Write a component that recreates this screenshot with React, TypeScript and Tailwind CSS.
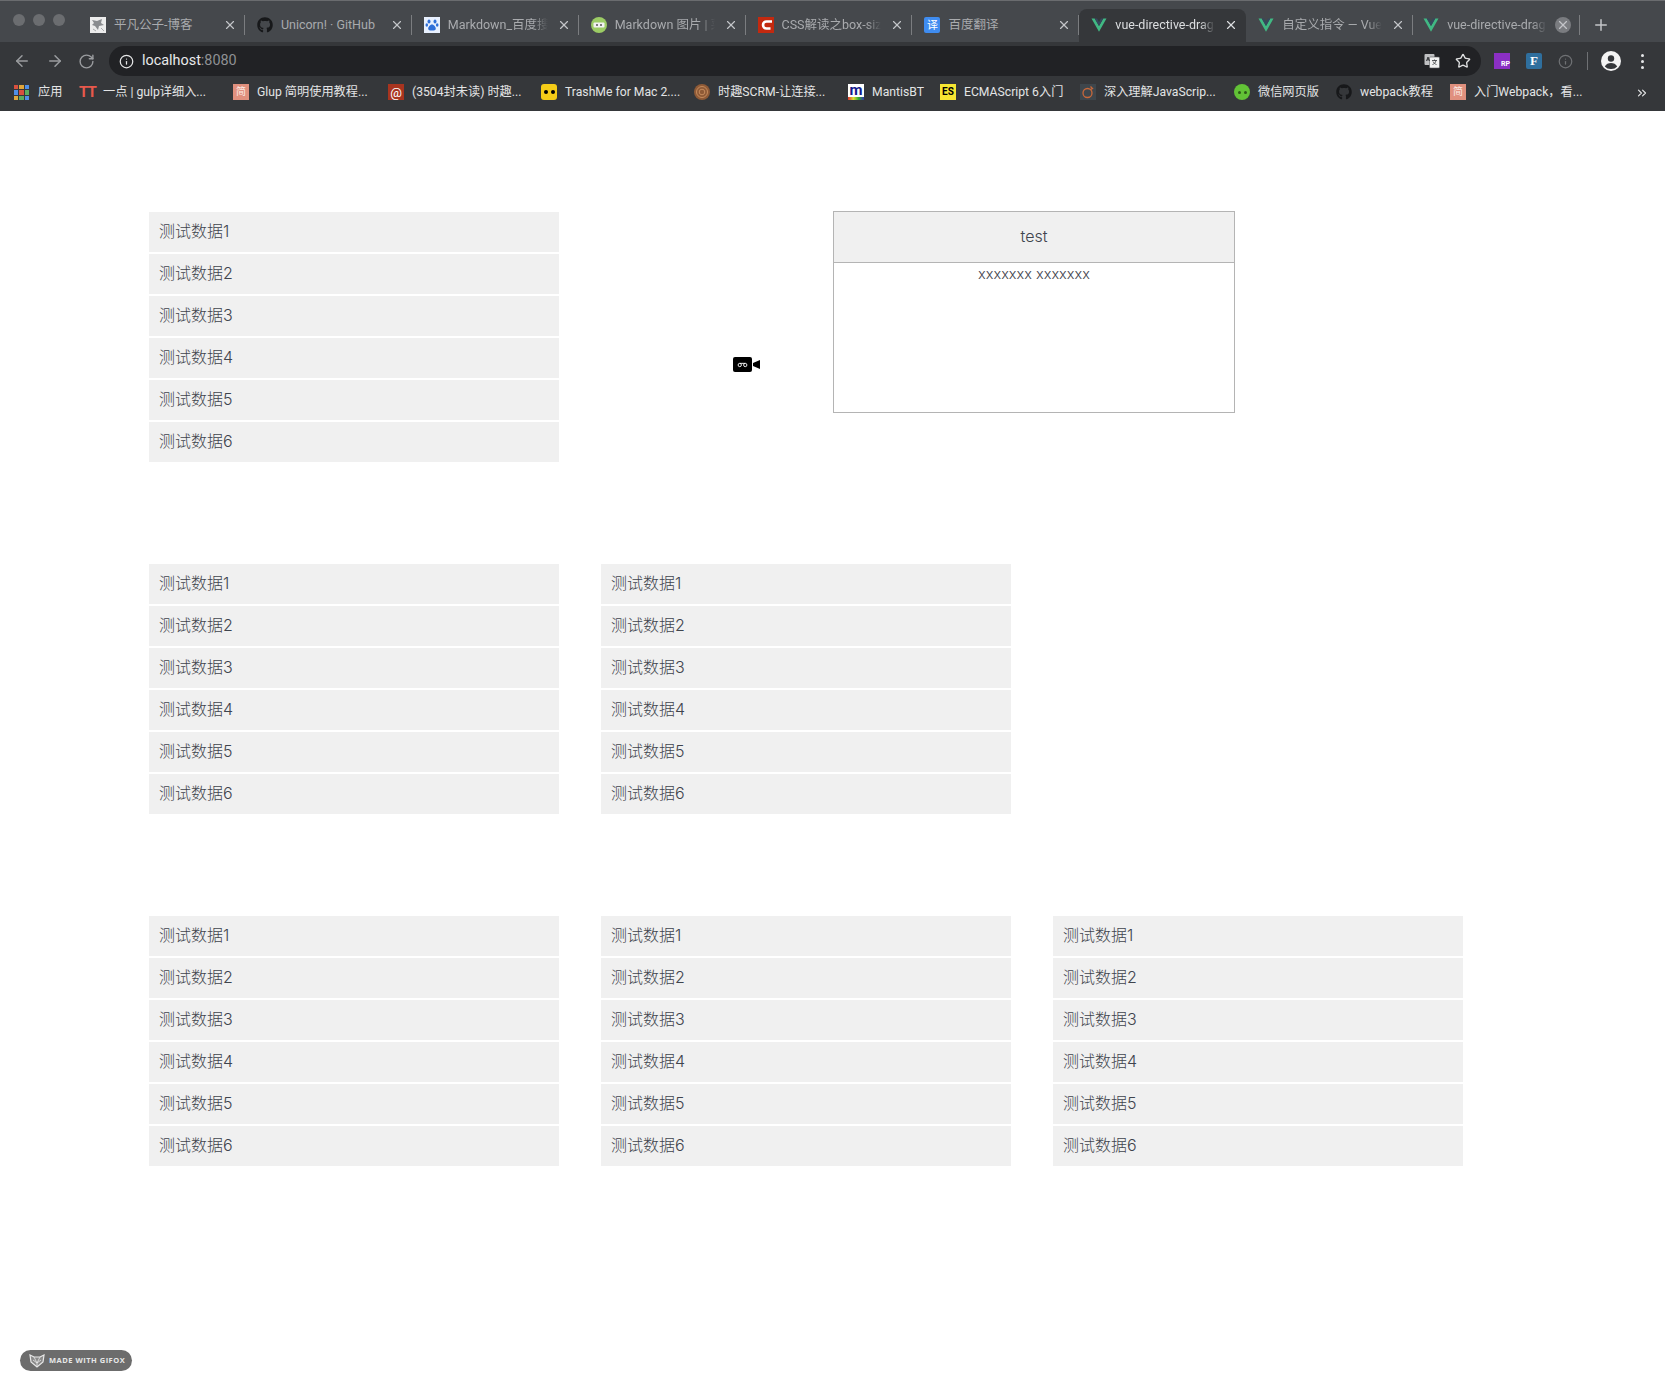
import { ReactNode } from 'react'
import { FaGithub } from 'react-icons/fa'
import { ArrowLeft, ArrowRight, RotateCw, Info, Star, Plus, X, ChevronsRight } from 'lucide-react'

const uiFont = "font-['Roboto','Noto_Sans_CJK_SC',sans-serif]"
const pageFont = "font-['Inter','Noto_Sans_CJK_SC',sans-serif]"

const rows = ['测试数据1', '测试数据2', '测试数据3', '测试数据4', '测试数据5', '测试数据6']

function VueIcon({ className = '' }: { className?: string }) {
  return (
    <svg viewBox="0 0 16 16" className={`w-4 h-4 shrink-0 ${className}`}>
      <path d="M0.5 1.5h3.2L8 9l4.3-7.5h3.2L8 14.8z" fill="#41b883" />
      <path d="M3.7 1.5h2.4L8 4.9l1.9-3.4h2.4L8 9z" fill="#35495e" />
    </svg>
  )
}

function LetterIcon({ bg, color, label, className = '' }: { bg: string; color: string; label: string; className?: string }) {
  return (
    <span className={`w-4 h-4 shrink-0 flex items-center justify-center text-[10px] leading-none ${bg} ${color} ${className}`}>
      {label}
    </span>
  )
}

function PawIcon() {
  return (
    <svg viewBox="0 0 16 16" className="w-4 h-4 shrink-0">
      <rect width="16" height="16" fill="#e8f0fe" />
      <g fill="#2e6fd8">
        <ellipse cx="5" cy="4.500" rx="1.500" ry="2" />
        <ellipse cx="11" cy="4.500" rx="1.500" ry="2" />
        <ellipse cx="2.800" cy="8" rx="1.300" ry="1.700" />
        <ellipse cx="13.200" cy="8" rx="1.300" ry="1.700" />
        <path d="M8 7.500c2 0 3.800 2.500 3.800 4.300S9.500 13.500 8 13.500 4.200 13.600 4.200 11.800 6 7.500 8 7.500z" />
      </g>
    </svg>
  )
}

function BlogIcon() {
  return (
    <svg viewBox="0 0 16 16" className="w-4 h-4 shrink-0">
      <rect width="16" height="16" fill="#ececec" />
      <path d="M2 3l5 1 5-2-1 4 3 2-5 1-1 4-3-4-3-1 2-2z" fill="#8a8c8f" />
      <path d="M3 12l3 2M11 11l3 3" stroke="#a9abad" />
    </svg>
  )
}

function MdIcon() {
  return (
    <svg viewBox="0 0 16 16" className="w-4 h-4 shrink-0">
      <circle cx="8" cy="8" r="8" fill="#9ccc65" />
      <rect x="2.500" y="5.500" width="11" height="5" rx="1" fill="#f1f1f1" />
      <circle cx="6" cy="8" r="1" fill="#555" />
      <circle cx="10" cy="8" r="1" fill="#555" />
    </svg>
  )
}

function CsdnIcon() {
  return (
    <svg viewBox="0 0 16 16" className="w-4 h-4 shrink-0">
      <rect width="16" height="16" fill="#c3290f" />
      <path d="M14 4.500H8.500a3.500 3.500 0 0 0 0 7h4" fill="none" stroke="#fff" strokeWidth="2.600" />
    </svg>
  )
}

function TransIcon() {
  return (
    <span className="w-4 h-4 shrink-0 rounded-[2px] bg-[#3f8cf0] text-white flex items-center justify-center text-[11px] leading-none">译</span>
  )
}

const tabs: { title: string; icon: ReactNode; faded?: boolean; active?: boolean; closeBg?: boolean }[] = [
  { title: '平凡公子-博客', icon: <BlogIcon /> },
  { title: 'Unicorn! · GitHub', icon: <FaGithub className="w-4 h-4 shrink-0 text-[#17181a]" /> },
  { title: 'Markdown_百度搜索', icon: <PawIcon />, faded: true },
  { title: 'Markdown 图片 | 菜鸟', icon: <MdIcon />, faded: true },
  { title: 'CSS解读之box-sizing', icon: <CsdnIcon />, faded: true },
  { title: '百度翻译', icon: <TransIcon /> },
  { title: 'vue-directive-drag', icon: <VueIcon />, active: true, faded: true },
  { title: '自定义指令 — Vue.js', icon: <VueIcon />, faded: true },
  { title: 'vue-directive-drag', icon: <VueIcon />, faded: true, closeBg: true },
]

function Tab({ title, icon, faded, active, closeBg }: (typeof tabs)[number]) {
  return (
    <div className={`relative w-[166.9px] h-[33px] shrink-0 flex items-center pl-3 pr-[7px] pb-[1px] gap-2 ${active ? 'bg-[#35373a] rounded-t-lg' : ''} ${closeBg ? 'pl-[10px] pr-[9px]' : ''}`}>
      {icon}
      <span className={`flex-1 min-w-0 whitespace-nowrap overflow-hidden text-[12.5px] ${active ? 'text-[#dcdee0]' : 'text-[#a9abae]'} ${faded ? 'mask-r-from-[85%] mask-r-to-100%' : ''}`}>
        {title}
      </span>
      <span className={`w-4 h-4 shrink-0 flex items-center justify-center rounded-full ${closeBg ? 'bg-[#7a7c80]' : ''}`}>
        <X className={`w-[14px] h-[14px] ${active ? 'text-[#dcdee0]' : 'text-[#c3c5c8]'}`} strokeWidth={2} />
      </span>
      {!active && <span className="absolute right-0 top-[6px] h-[20px] w-px bg-[#7b7d80]" />}
    </div>
  )
}

const bookmarks: { title: string; icon: ReactNode; w: string }[] = [
  { title: '一点 | gulp详细入...', w: 'w-[154px]', icon: <span className="w-4 h-4 shrink-0 text-[#e8594c] font-bold text-[15px] leading-4 tracking-[-1px]">TT</span> },
  { title: 'Glup 简明使用教程...', w: 'w-[155px]', icon: <LetterIcon bg="bg-[#e0907e]" color="text-[#fbe9e4]" label="简" /> },
  { title: '(3504封未读) 时趣...', w: 'w-[153px]', icon: <LetterIcon bg="bg-[#a8341f]" color="text-white" label="@" className="text-[13px]" /> },
  { title: 'TrashMe for Mac 2....', w: 'w-[153px]', icon: <span className="w-4 h-4 shrink-0 rounded-[3px] bg-[#f5cc17] flex items-center justify-center gap-[3px]"><span className="w-1 h-1 rounded-full bg-black" /><span className="w-1 h-1 rounded-full bg-black" /></span> },
  { title: '时趣SCRM-让连接...', w: 'w-[154px]', icon: (
    <svg viewBox="0 0 16 16" className="w-4 h-4 shrink-0">
      <circle cx="8" cy="8" r="8" fill="#8f5a36" />
      <circle cx="8" cy="8" r="5.500" fill="none" stroke="#c48a5c" />
      <circle cx="8" cy="8" r="2.800" fill="none" stroke="#c48a5c" />
    </svg>
  ) },
  { title: 'MantisBT', w: 'w-[92px]', icon: (
    <span className="w-4 h-4 shrink-0 bg-white relative overflow-hidden flex justify-center">
      <span className="text-[#13198c] font-bold text-[15px] leading-3">m</span>
      <span className="absolute left-0 right-0 bottom-0 h-[3px] bg-[linear-gradient(90deg,#d33,#dd3,#3a3,#33a)]" />
    </span>
  ) },
  { title: 'ECMAScript 6入门', w: 'w-[140px]', icon: <LetterIcon bg="bg-[#f7e632]" color="text-black" label="ES" className="font-bold" /> },
  { title: '深入理解JavaScrip...', w: 'w-[154px]', icon: (
    <svg viewBox="0 0 16 16" className="w-4 h-4 shrink-0">
      <rect width="16" height="16" fill="#3e464c" />
      <circle cx="7.500" cy="9" r="4.500" fill="none" stroke="#c9683a" strokeWidth="1.300" />
      <path d="M10.500 2.500l2 2-2 1" fill="none" stroke="#c9683a" strokeWidth="1.300" />
    </svg>
  ) },
  { title: '微信网页版', w: 'w-[102px]', icon: <span className="w-4 h-4 shrink-0 rounded-full bg-[#62c236] flex items-center justify-center gap-[3px]"><span className="w-[3px] h-[3px] rounded-full bg-[#2c5a17]" /><span className="w-[3px] h-[3px] rounded-full bg-[#2c5a17]" /></span> },
  { title: 'webpack教程', w: 'w-[114px]', icon: <FaGithub className="w-4 h-4 shrink-0 text-[#17181a]" /> },
  { title: '入门Webpack，看...', w: 'w-[160px]', icon: <LetterIcon bg="bg-[#e0907e]" color="text-[#fbe9e4]" label="简" /> },
]

function AppsIcon() {
  const colors = ['#d9503f', '#e0a63c', '#4f8fe8', '#4f8fe8', '#d9503f', '#5bab5f', '#e0a63c', '#5bab5f', '#4f8fe8']
  return (
    <span className="w-[15px] h-[15px] shrink-0 grid grid-cols-3 gap-px">
      {colors.map((c, i) => (
        <span key={i} style={{ backgroundColor: c }} />
      ))}
    </span>
  )
}

function TranslateIcon() {
  return (
    <svg viewBox="0 0 16 16" className="w-4 h-4 ml-auto mr-[15px]">
      <rect x="0.500" y="1" width="10" height="11" rx="1" fill="#bfc0c2" />
      <rect x="5.500" y="4" width="10" height="11" rx="1" fill="#f2f2f2" stroke="#57595c" strokeWidth="0.600" />
      <path d="M2.500 8l1.500-4 1.500 4M3 6.800h2" fill="none" stroke="#35373a" />
      <path d="M8 7.500h5M10.500 6.500v1M12 7.500c-.5 2.500-2 3.500-3.500 4M9 8.500c.8 1.500 2 2.500 3.500 3" fill="none" stroke="#35373a" strokeWidth="0.800" />
    </svg>
  )
}

function AccountIcon() {
  return (
    <svg viewBox="0 0 20 20" className="w-5 h-5 shrink-0">
      <circle cx="10" cy="10" r="10" fill="#f3f3f3" />
      <circle cx="10" cy="7.500" r="3.200" fill="#35373a" />
      <path d="M3.800 15.500c1.200-2.400 3.700-3.500 6.200-3.500s5 1.100 6.200 3.500A8 8 0 0 1 10 18a8 8 0 0 1-6.200-2.500z" fill="#35373a" />
    </svg>
  )
}

function BrowserChrome() {
  return (
    <header className={`bg-[#35373a] ${uiFont}`}>
      <div className="h-[42px] bg-[#45484c] border-t border-[#6a6c6f] flex items-end">
        <div className="w-[78px] h-full shrink-0 flex items-center gap-2 pl-[13px] pb-[3px]">
          <span className="w-3 h-3 rounded-full bg-[#6b6d70]" />
          <span className="w-3 h-3 rounded-full bg-[#6b6d70]" />
          <span className="w-3 h-3 rounded-full bg-[#6b6d70]" />
        </div>
        {tabs.map((t) => (
          <Tab key={t.title + t.closeBg} {...t} />
        ))}
        <div className="h-[33px] flex items-center pl-[12px] pb-[1px]">
          <Plus className="w-[18px] h-[18px] text-[#c3c5c8]" strokeWidth={2} />
        </div>
      </div>
      <div className="h-[37px] flex items-center pl-[13px] pr-[12px] pt-[1px]">
        <ArrowLeft className="w-[18px] h-[18px] text-[#9a9c9f] shrink-0" strokeWidth={2} />
        <ArrowRight className="ml-[15px] w-[18px] h-[18px] text-[#9a9c9f] shrink-0" strokeWidth={2} />
        <RotateCw className="ml-[14px] w-[17px] h-[17px] text-[#9a9c9f] shrink-0" strokeWidth={2} />
        <div className="ml-[14px] w-[1372px] h-[30px] shrink-0 rounded-full bg-[#212225] flex items-center pl-[10px] pr-[10px]">
          <Info className="w-[15px] h-[15px] text-[#e6e7e8]" strokeWidth={2} />
          <span className="ml-[8px] text-[14.4px] text-[#e8e9ea]">localhost<span className="text-[#8f9194]">:8080</span></span>
          <TranslateIcon />
          <Star className="w-4 h-4 text-[#dfe0e1]" strokeWidth={2} />
        </div>
        <span className="ml-[13px] w-4 h-4 shrink-0 bg-[#8b2fc4] text-white text-[7px] font-bold flex items-end justify-end">RP</span>
        <span className="ml-[16px] w-4 h-4 shrink-0 rounded-[2px] bg-[#2f6f9e] text-white text-[13px] font-bold font-['Liberation_Serif',serif] flex items-center justify-center">F</span>
        <Info className="ml-[16px] w-[15px] h-[15px] shrink-0 text-[#6f7174]" strokeWidth={2} />
        <span className="ml-[14px] h-[18px] w-px shrink-0 bg-[#6f7174]" />
        <span className="ml-[13px]"><AccountIcon /></span>
        <span className="ml-[20px] flex flex-col gap-[3px] shrink-0">
          <span className="w-[3px] h-[3px] rounded-full bg-[#e6e7e8]" />
          <span className="w-[3px] h-[3px] rounded-full bg-[#e6e7e8]" />
          <span className="w-[3px] h-[3px] rounded-full bg-[#e6e7e8]" />
        </span>
      </div>
      <div className="h-[32px] flex items-center pl-[14px] pb-[5px] text-[12.2px] text-[#e3e4e5] whitespace-nowrap">
        <div className="w-[65px] shrink-0 flex items-center gap-[9px]">
          <AppsIcon />
          <span>应用</span>
        </div>
        {bookmarks.map((b) => (
          <div key={b.title} className={`${b.w} shrink-0 flex items-center gap-2`}>
            {b.icon}
            <span>{b.title}</span>
          </div>
        ))}
        <ChevronsRight className="ml-auto mr-[16px] w-[14px] h-[14px] text-[#e3e4e5]" strokeWidth={2} />
      </div>
    </header>
  )
}

function DataList() {
  return (
    <ul className="w-[410px] shrink-0 flex flex-col gap-[2px]">
      {rows.map((r) => (
        <li key={r} className="h-10 bg-[#f0f0f0] px-[10px] pb-[2px] flex items-center text-base font-light text-[#3f444d]">
          {r}
        </li>
      ))}
    </ul>
  )
}

export default function App() {
  return (
    <div className={`relative w-[1665px] h-[1391px] bg-white overflow-hidden ${pageFont}`}>
      <BrowserChrome />
      <main className="pl-[149px] pt-[101px] flex flex-col gap-[102px]">
        <section className="flex">
          <DataList />
          <div className="ml-[274px] -mt-px w-[402px] h-[202px] border border-[#b4b4b4] text-center text-[#3f444d]">
            <div className="h-[51px] bg-[#f0f0f0] border-b border-[#b4b4b4] pb-[2px] flex items-center justify-center text-base font-light">test</div>
            <p className="text-[14.5px] font-light leading-[22px]">xxxxxxx xxxxxxx</p>
          </div>
        </section>
        <section className="flex gap-[42px]">
          <DataList />
          <DataList />
        </section>
        <section className="flex gap-[42px]">
          <DataList />
          <DataList />
          <DataList />
        </section>
      </main>

      {/* recording cursor */}
      <div className="absolute left-[733px] top-[357px] flex items-center gap-[1px]">
        <span className="w-[19px] h-[15px] rounded-[2px] bg-black flex items-center justify-center">
          <svg viewBox="0 0 12 6" className="w-[11px] h-[6px]">
            <circle cx="3" cy="3" r="1.800" fill="none" stroke="#fff" />
            <circle cx="9" cy="3" r="1.800" fill="none" stroke="#fff" />
            <path d="M3 1.200h6" stroke="#fff" />
          </svg>
        </span>
        <svg viewBox="0 0 7 9" className="w-[7px] h-[9px]">
          <path d="M7 0v9L0 6V3z" fill="#000" />
        </svg>
      </div>

      {/* gifox badge */}
      <div className="absolute left-[20px] top-[1350px] w-[112px] h-[21px] rounded-full bg-[#6c6c6c] flex items-center pl-[9px] gap-[4px]">
        <svg viewBox="0 0 16 14" className="w-4 h-[14px]">
          <path d="M1 1l4 2h6l4-2-1 7-6 5-6-5z" fill="#8a8a8a" stroke="#e8e8e8" strokeWidth="1.200" />
          <path d="M4 6l4 3 4-3M8 9v4M5 3l3 6 3-6" fill="none" stroke="#e8e8e8" strokeWidth="0.800" />
        </svg>
        <span className="font-['Open_Sans',sans-serif] text-[7.5px] font-bold tracking-[0.5px] text-[#e8e8e8] whitespace-nowrap">MADE WITH GIFOX</span>
      </div>
    </div>
  )
}
